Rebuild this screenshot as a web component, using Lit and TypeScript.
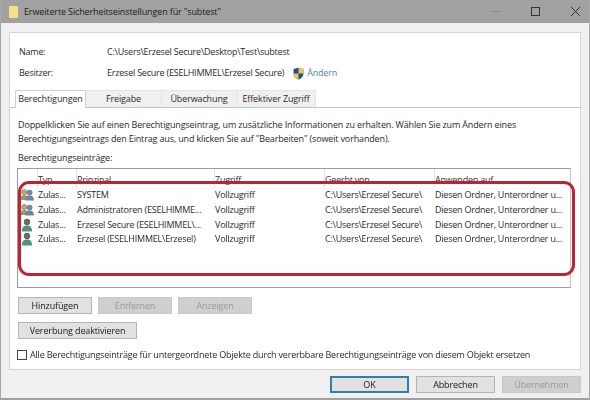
import { LitElement, html, css, svg } from "lit";
import { customElement } from "lit/decorators.js";

const person = (x: number, y: number, s: number, head: string, body: string) => svg`
  <circle cx=${x} cy=${y + 3 * s} r=${2.6 * s} fill=${head} stroke="#5a4a3a" stroke-width="0.4"/>
  <path d="M${x - 4.4 * s} ${y + 11 * s} C${x - 4.4 * s} ${y + 7 * s} ${x - 2 * s} ${y + 6 * s} ${x} ${y + 6 * s} C${x + 2 * s} ${y + 6 * s} ${x + 4.4 * s} ${y + 7 * s} ${x + 4.4 * s} ${y + 11 * s} Z" fill=${body}/>`;

const groupIcon = html`<svg class="ico" viewBox="0 0 14 14">
  ${person(4.2, 1, 1, "#b9a878", "#9e9a5e")}
  ${person(9.6, 1.6, 1, "#7d8ca6", "#6585ad")}
</svg>`;

const userIcon = html`<svg class="ico" viewBox="0 0 14 14">
  <circle cx="7" cy="4" r="2.9" fill="#6b6a5c" stroke="#3e3e36" stroke-width="0.5"/>
  <path d="M2 13.4 C2 9 4 7.6 7 7.6 C10 7.6 12 9 12 13.4 Z" fill="#4f9478"/>
</svg>`;

const shield = html`<svg class="shield" viewBox="0 0 12 14">
  <path d="M6 .6 L11.4 2.2 V7 C11.4 10.4 8.8 12.6 6 13.6 C3.2 12.6 .6 10.4 .6 7 V2.2 Z" fill="#1f4f86"/>
  <path d="M6 .6 L11.4 2.2 V7 H6 Z" fill="#e8c94a"/>
  <path d="M6 7 H.6 C.6 10.4 3.2 12.6 6 13.6 Z" fill="#e8c94a"/>
</svg>`;

const rows = [
  { icon: groupIcon, who: "SYSTEM" },
  { icon: groupIcon, who: "Administratoren (ESELHIMME..." },
  { icon: userIcon, who: "Erzesel Secure (ESELHIMMEL\\..." },
  { icon: userIcon, who: "Erzesel (ESELHIMMEL\\Erzesel)" },
];

@customElement("app-root")
export class AppRoot extends LitElement {
  static styles = css`
    :host {
      display: block;
      position: relative;
      width: 590px;
      height: 400px;
      overflow: hidden;
      background: #f0f0f0;
      color: #2a2a2a;
      font-family: "Open Sans", "Noto Sans", sans-serif;
      font-size: 9px;
      letter-spacing: -0.13px;
      line-height: 14px;
    }
    .window {
      display: flex;
      flex-direction: column;
      height: 400px;
      box-sizing: border-box;
      border-left: 1px solid #a8a8a8;
      border-right: 1px solid #a8a8a8;
      border-bottom: 2px solid #a0a0a0;
      filter: blur(0.35px);
    }
    .title {
      height: 23px;
      flex: none;
      display: flex;
      align-items: center;
      background: #a1a1a1;
      color: #1c1c1c;
      padding-left: 8px;
      gap: 6px;
    }
    .folder { width: 9px; height: 12px; background: #f4e08a; border-radius: 1px; }
    .title .t { flex: 1; padding-top: 1px; }
    .ctl { display: flex; align-items: center; margin-right: 8px; gap: 29px; }
    .ctl svg { width: 11px; height: 11px; display: block; }
    .panel {
      margin: 9px 8px 0 8px;
      height: 338px;
      box-sizing: border-box;
      flex: none;
      background: #fff;
      border: 1px solid #d4d4d4;
      display: flex;
      flex-direction: column;
    }
    .info {
      display: grid;
      grid-template-columns: 88px auto;
      row-gap: 7px;
      padding: 12px 0 0 9px;
      justify-items: start;
      align-items: center;
      letter-spacing: -0.22px;
    }
    .info > div { height: 14px; }
    .owner { display: flex; align-items: center; gap: 0; }
    .shield { width: 11px; height: 13px; margin: 0 3px 0 9px; }
    .link { color: #4d87a8; }
    .tabs {
      display: flex;
      margin-top: 10px;
      height: 17px;
      padding-left: 5px;
      border-bottom: 1px solid #c4c4c4;
      box-sizing: content-box;
    }
    .tab {
      box-sizing: border-box;
      height: 17px;
      padding-top: 1px;
      text-align: center;
      background: #f0f0f0;
      border: 1px solid #e4e4e4;
      border-bottom: none;
      margin-left: -1px;
    }
    .tab.on { background: #fff; height: 18px; border-color: #cfcfcf; position: relative; z-index: 1; }
    .tab.w1 { width: 71px; margin-left: 0; }
    .tab.w2 { width: 77px; }
    .tab.w3 { width: 76px; }
    .tab.w4 { width: 80px; }
    .body {
      display: flex;
      flex-direction: column;
      padding: 10px 9px 0 8px;
      align-items: flex-start;
    }
    .desc { white-space: nowrap; letter-spacing: -0.15px; }
    .lbl { margin-top: 5px; }
    .table {
      margin-top: 3px;
      width: 554px;
      height: 120px;
      box-sizing: border-box;
      border: 1px solid #9b9b9b;
      border-right-color: #c4c4c4;
      margin-left: -1px;
      letter-spacing: -0.22px;
    }
    .row {
      display: grid;
      grid-template-columns: 20px 39px 138px 110px 110px 1fr;
      height: 14.7px;
      align-items: center;
      white-space: nowrap;
    }
    .row.head { height: 19px; color: #333; }
    .row.head > div { height: 19px; padding-top: 3px; line-height: 16px; border-right: 1px solid #e4e4e4; box-sizing: border-box; overflow: hidden; }
    .row.head > div:last-child { border-right: none; }
    .ico { width: 14px; height: 14px; margin-left: 2px; display: block; }
    .btns { display: flex; gap: 6px; margin-top: 9px; }
    button {
      font: inherit;
      letter-spacing: inherit;
      color: #1a1a1a;
      height: 17px;
      padding: 0;
      background: #e1e1e1;
      border: 1px solid #b4b4b4;
      box-sizing: border-box;
    }
    button:disabled { color: #9a9a9a; background: #cfcfcf; border-color: #c8c8c8; }
    .sm { width: 74px; }
    .inh { width: 119px; margin-top: 8px; }
    .check { display: flex; align-items: center; gap: 3px; margin-top: 9px; margin-left: -1px; white-space: nowrap; letter-spacing: -0.19px; }
    .box { width: 10px; height: 10px; border: 1px solid #444; background: #fff; flex: none; box-sizing: border-box; }
    .foot {
      display: flex;
      justify-content: flex-end;
      gap: 7px;
      padding: 6px 8px 0 0;
    }
    .foot button { width: 79px; }
    .ok { border: 1px solid #2f7fa8 !important; box-shadow: inset 0 0 0 1px #2f7fa8; }
    .mark {
      position: absolute;
      left: 18px;
      top: 181px;
      width: 557px;
      height: 95px;
      box-sizing: border-box;
      border: 3px solid #bb2433;
      border-radius: 11px;
      filter: blur(0.3px);
    }
  `;

  render() {
    return html`
      <div class="window">
        <div class="title">
          <div class="folder"></div>
          <div class="t">Erweiterte Sicherheitseinstellungen für "subtest"</div>
          <div class="ctl">
            <svg viewBox="0 0 11 11"><path d="M0 5.5H11" stroke="#8e8e8e" stroke-width="1"/></svg>
            <svg viewBox="0 0 11 11"><rect x="1.5" y="1.5" width="8" height="8" fill="none" stroke="#333" stroke-width="1"/></svg>
            <svg viewBox="0 0 11 11"><path d="M1 1L10 10M10 1L1 10" stroke="#333" stroke-width="1"/></svg>
          </div>
        </div>
        <div class="panel">
          <div class="info">
            <div>Name:</div><div>C:\\Users\\Erzesel Secure\\Desktop\\Test\\subtest</div>
            <div>Besitzer:</div>
            <div class="owner">Erzesel Secure (ESELHIMMEL\\Erzesel Secure)${shield}<span class="link">Ändern</span></div>
          </div>
          <div class="tabs">
            <div class="tab on w1">Berechtigungen</div>
            <div class="tab w2">Freigabe</div>
            <div class="tab w3">Überwachung</div>
            <div class="tab w4">Effektiver Zugriff</div>
          </div>
          <div class="body">
            <div class="desc">Doppelklicken Sie auf einen Berechtigungseintrag, um zusätzliche Informationen zu erhalten. Wählen Sie zum Ändern eines<br />Berechtigungseintrags den Eintrag aus, und klicken Sie auf "Bearbeiten" (soweit vorhanden).</div>
            <div class="lbl">Berechtigungseinträge:</div>
            <div class="table">
              <div class="row head"><div></div><div>Typ</div><div>Prinzipal</div><div>Zugriff</div><div>Geerbt von</div><div>Anwenden auf</div></div>
              ${rows.map(
                (r) => html`<div class="row">
                  ${r.icon}
                  <div>Zulas...</div>
                  <div>${r.who}</div>
                  <div>Vollzugriff</div>
                  <div>C:\\Users\\Erzesel Secure\\</div>
                  <div>Diesen Ordner, Unterordner u...</div>
                </div>`
              )}
            </div>
            <div class="btns">
              <button class="sm">Hinzufügen</button>
              <button class="sm" disabled>Entfernen</button>
              <button class="sm" disabled>Anzeigen</button>
            </div>
            <button class="inh">Vererbung deaktivieren</button>
            <div class="check"><div class="box"></div>Alle Berechtigungseinträge für untergeordnete Objekte durch vererbbare Berechtigungseinträge von diesem Objekt ersetzen</div>
          </div>
        </div>
        <div class="foot">
          <button class="ok">OK</button>
          <button>Abbrechen</button>
          <button disabled>Übernehmen</button>
        </div>
      </div>
      <div class="mark"></div>
    `;
  }
}
